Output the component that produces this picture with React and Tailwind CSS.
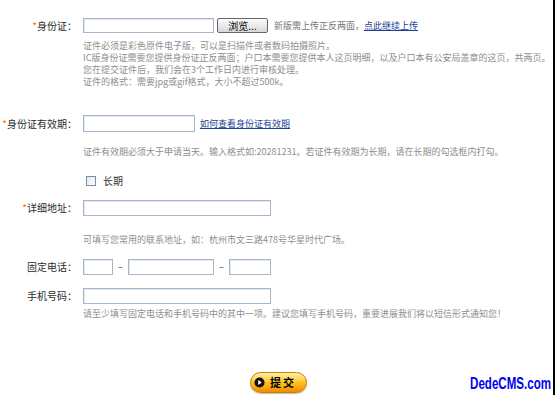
import React from 'react';

const input = 'border border-[#a7b6cb] bg-white shadow-[inset_1px_1px_0_#e3e8ef]';

function Label({ children, required }) {
  return (
    <div className="w-[77px] shrink-0 text-right text-[10px] leading-none text-[#2b2b2b]">
      {required && <span className="text-[#ff6600]">*</span>}
      {children}
    </div>
  );
}

function Help({ children, className = '' }) {
  return (
    <div className={`ml-[83px] text-[9px] leading-[12px] text-[#8e8e8e] ${className}`}>{children}</div>
  );
}

export default function App() {
  return (
    <div className="relative w-[555px] h-[395px] overflow-hidden bg-white border-r-[2px] border-black font-['Noto_Sans_CJK_SC',sans-serif]">
      <div className="flex flex-col pt-[18px]">
        {/* 身份证 */}
        <div className="flex items-center h-[15px] gap-[6px]">
          <Label required>身份证：</Label>
          <div className={`w-[131px] h-[15px] ${input}`} />
          <button className="ml-[-3px] w-[51px] h-[15px] border border-[#666] rounded-[2px] bg-gradient-to-b from-[#fdfdfd] to-[#d8d8d8] text-[10px] leading-none text-black">
            浏览...
          </button>
          <span className="text-[9px] leading-none text-[#777]">
            新版需上传正反两面，
            <a href="#" className="text-[#1c3f94] underline">点此继续上传</a>
          </span>
        </div>
        <Help className="mt-[7px]">
          <p>证件必须是彩色原件电子版，可以是扫描件或者数码拍摄照片。</p>
          <p>IC版身份证需要您提供身份证正反两面；户口本需要您提供本人这页明细，以及户口本有公安局盖章的这页，共两页。</p>
          <p>您在提交证件后，我们会在3个工作日内进行审核处理。</p>
          <p>证件的格式：需要jpg或gif格式，大小不超过500k。</p>
        </Help>

        {/* 身份证有效期 */}
        <div className="flex items-center h-[17px] gap-[6px] mt-[27px]">
          <Label required>身份证有效期：</Label>
          <div className={`w-[112px] h-[17px] ${input}`} />
          <a href="#" className="ml-[-1px] text-[9px] leading-none text-[#1c3f94] underline">如何查看身份证有效期</a>
        </div>
        <Help className="mt-[14px]">
          证件有效期必须大于申请当天。输入格式如:20281231。若证件有效期为长期，请在长期的勾选框内打勾。
        </Help>

        <div className="flex items-center h-[12px] mt-[17px] ml-[86px] gap-[7px]">
          <span className="w-[10px] h-[10px] border border-[#7c8ca3] bg-gradient-to-br from-[#e4e8ee] to-white" />
          <span className="text-[10px] leading-none text-[#333]">长期</span>
        </div>

        {/* 详细地址 */}
        <div className="flex items-center h-[16px] gap-[6px] mt-[13px]">
          <Label required>详细地址：</Label>
          <div className={`w-[188px] h-[16px] ${input}`} />
        </div>
        <Help className="mt-[18px]">可填写您常用的联系地址，如：杭州市文三路478号华星时代广场。</Help>

        {/* 固定电话 */}
        <div className="flex items-center h-[16px] gap-[6px] mt-[13px]">
          <Label>固定电话：</Label>
          <div className="flex items-center">
            <div className={`w-[30px] h-[16px] ${input}`} />
            <span className="w-[15px] text-center text-[9px] text-[#333]">–</span>
            <div className={`w-[86px] h-[16px] ${input}`} />
            <span className="w-[15px] text-center text-[9px] text-[#333]">–</span>
            <div className={`w-[42px] h-[16px] ${input}`} />
          </div>
        </div>

        {/* 手机号码 */}
        <div className="flex items-center h-[16px] gap-[6px] mt-[13px]">
          <Label>手机号码：</Label>
          <div className={`w-[188px] h-[16px] ${input}`} />
        </div>
        <Help className="mt-[4px]">
          请至少填写固定电话和手机号码中的其中一项。建议您填写手机号码，重要进展我们将以短信形式通知您！
        </Help>

        <div className="flex justify-center mt-[52px] pl-[4px]">
          <button className="flex items-center gap-[5px] w-[57px] h-[21px] pl-[3px] rounded-full border border-[#d07a00] bg-gradient-to-b from-[#fff0a0] via-[#ffc21a] to-[#f08c00] shadow-[0_1px_1px_rgba(0,0,0,0.25)]">
            <svg width="11" height="11" viewBox="0 0 12 12">
              <circle cx="6" cy="6" r="5.5" fill="#111" />
              <path d="M4.6 3.4 L8.6 6 L4.6 8.6 Z" fill="#fff" />
            </svg>
            <span className="text-[11px] font-bold leading-none text-black tracking-[2px]">提交</span>
          </button>
        </div>
      </div>

      <div className="absolute right-[2px] bottom-[3px] origin-right scale-x-[0.68] text-[17px] font-bold leading-none text-[#0000ee] font-['Liberation_Sans',sans-serif]">
        DedeCMS.com
      </div>
    </div>
  );
}
